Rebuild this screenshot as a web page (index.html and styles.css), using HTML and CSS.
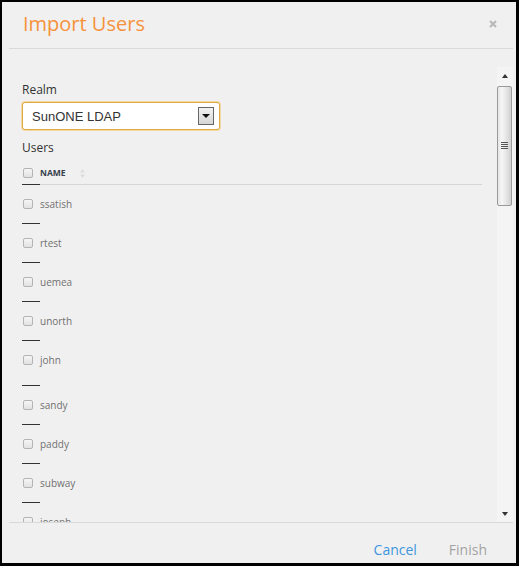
FILE: index.html
```html
<!DOCTYPE html>
<html lang="en">
<head>
    <meta charset="UTF-8">
    <meta name="viewport" content="width=device-width, initial-scale=1.0">
    <title>Import Users</title>
    <link rel="stylesheet" href="styles.css">
</head>
<body>
    <div class="dialog">
        <div class="dialog-header">
            <h1 class="dialog-title">Import Users</h1>
            <button class="dialog-close" title="Close">
                <svg width="8" height="8" viewBox="0 0 8 8"><path d="M1 1L7 7M7 1L1 7" stroke="#b8b8b8" stroke-width="2"/></svg>
            </button>
        </div>

        <div class="dialog-body">
            <div class="pane">
                <label class="field-label">Realm</label>
                <div class="select">
                    <span class="select-value">SunONE LDAP</span>
                    <span class="select-btn"><i class="caret"></i></span>
                </div>

                <label class="field-label users-label">Users</label>
                <table class="user-table">
                    <thead>
                        <tr>
                            <th class="col-check"><input type="checkbox"></th>
                            <th class="col-name">NAME <span class="sort">
                                <svg width="5" height="9" viewBox="0 0 5 9"><path d="M2.5 0L5 3.5H0Z M2.5 9L0 5.5H5Z" fill="#dcdcdc"/></svg>
                            </span></th>
                        </tr>
                    </thead>
                    <tbody>
                        <tr><td class="col-check"><input type="checkbox"></td><td class="col-name">ssatish</td></tr>
                        <tr><td class="col-check"><input type="checkbox"></td><td class="col-name">rtest</td></tr>
                        <tr><td class="col-check"><input type="checkbox"></td><td class="col-name">uemea</td></tr>
                        <tr><td class="col-check"><input type="checkbox"></td><td class="col-name">unorth</td></tr>
                        <tr class="tall"><td class="col-check"><input type="checkbox"></td><td class="col-name">john</td></tr>
                        <tr><td class="col-check"><input type="checkbox"></td><td class="col-name">sandy</td></tr>
                        <tr><td class="col-check"><input type="checkbox"></td><td class="col-name">paddy</td></tr>
                        <tr><td class="col-check"><input type="checkbox"></td><td class="col-name">subway</td></tr>
                        <tr><td class="col-check"><input type="checkbox"></td><td class="col-name">joseph</td></tr>
                    </tbody>
                </table>
            </div>

            <!-- vertical scroll rail for the user list -->
            <div class="scrollbar">
                <div class="scroll-btn"><i class="arrow-up"></i></div>
                <div class="scroll-track">
                    <div class="scroll-thumb">
                        <svg width="7" height="8" viewBox="0 0 7 8"><path d="M0 0.5H7M0 2.5H7M0 4.5H7M0 6.5H7" stroke="#555" stroke-width="1"/></svg>
                    </div>
                </div>
                <div class="scroll-btn"><i class="arrow-down"></i></div>
            </div>
        </div>

        <div class="dialog-footer">
            <button class="btn-link">Cancel</button>
            <button class="btn-link" disabled>Finish</button>
        </div>
    </div>
</body>
</html>
```

FILE: styles.css
```css
html, body {
    margin: 0;
    padding: 0;
    background: #000;
}
body {
    font-family: 'Open Sans', 'Segoe UI', sans-serif;
    color: #333;
}
.dialog {
    margin: 2px 3px 3px 2px;
    height: 561px;
    background: #f0f0f0;
    display: flex;
    flex-direction: column;
}

/* header */
.dialog-header {
    display: flex;
    align-items: flex-start;
    justify-content: space-between;
    margin: 0 3px 0 7px;
    padding: 8px 0 11px 14px;
    border-bottom: 1px solid #d9d9d9;
}
.dialog-title {
    margin: 0;
    font-size: 20px;
    font-weight: 400;
    line-height: 27px;
    color: #f6923c;
}
.dialog-close {
    background: none;
    border: none;
    padding: 0;
    margin: 10px 16px 0 0;
    width: 8px;
    height: 8px;
    cursor: pointer;
}
.dialog-close svg {
    display: block;
}

/* scrolling body */
.dialog-body {
    margin: 18px 3px 0 7px;
    height: 455px;
    display: flex;
}
.pane {
    flex: 1;
    overflow: hidden;
    padding: 14px 15px 0 13px;
}

.scrollbar {
    width: 16px;
    display: flex;
    flex-direction: column;
    background: #f4f4f4;
}
.scroll-btn {
    height: 17px;
    display: flex;
    align-items: center;
    justify-content: center;
}
.arrow-up,
.arrow-down {
    width: 0;
    height: 0;
    border-left: 3.5px solid transparent;
    border-right: 3.5px solid transparent;
}
.arrow-up {
    border-bottom: 4px solid #333;
}
.arrow-down {
    border-top: 4px solid #333;
}
.scroll-track {
    flex: 1;
    padding-top: 2px;
}
.scroll-thumb {
    height: 120px;
    margin: 0 1px 0 0;
    box-sizing: border-box;
    border: 1px solid #9a9a9a;
    border-radius: 2px;
    background: linear-gradient(to right, #e6e6e6, #f6f6f6 30%, #e2e2e2 70%, #cfcfcf);
    display: flex;
    align-items: center;
    justify-content: center;
}
.scroll-thumb svg {
    display: block;
}

.field-label {
    display: block;
    font-size: 12px;
    line-height: 17px;
    color: #333;
}
.users-label {
    margin-top: 9px;
}

/* realm select */
.select {
    margin-top: 4px;
    width: 198px;
    height: 28px;
    box-sizing: border-box;
    display: flex;
    align-items: center;
    background: #fff;
    border: 1px solid #e0a842;
    border-radius: 3px;
    box-shadow: 0 0 0 1px #f2d9a8;
    padding: 0 5px 0 9px;
}
.select-value {
    flex: 1;
    font-family: 'Liberation Sans', Arial, sans-serif;
    font-size: 13px;
    color: #333;
}
.select-btn {
    width: 16px;
    height: 18px;
    box-sizing: border-box;
    border: 1px solid #666;
    background: linear-gradient(#f2f2f2, #d6d6d6);
    display: flex;
    align-items: center;
    justify-content: center;
}
.caret {
    width: 0;
    height: 0;
    border-left: 4px solid transparent;
    border-right: 4px solid transparent;
    border-top: 4px solid #111;
}

/* users table */
.user-table {
    width: 460px;
    margin-top: 5px;
    border-collapse: collapse;
}
.user-table th,
.user-table td {
    padding: 0;
    text-align: left;
}
.user-table th {
    height: 23px;
    font-size: 8.5px;
    font-weight: 700;
    color: #36404a;
    border-bottom: 1px solid #d6d6d6;
    vertical-align: middle;
}
.user-table th.col-check {
    border-bottom-color: #333;
}
.col-check {
    width: 18px;
}
.user-table td {
    height: 38px;
    font-size: 10px;
    color: #707070;
    vertical-align: middle;
}
.user-table td.col-check {
    border-bottom: 1px solid #333;
}
.user-table tr.tall td {
    padding-bottom: 6px;
}
.sort {
    display: inline-block;
    margin-left: 12px;
    vertical-align: middle;
}
.sort svg {
    display: block;
}

input[type="checkbox"] {
    appearance: none;
    -webkit-appearance: none;
    display: block;
    margin: 0 0 0 1px;
    width: 10px;
    height: 10px;
    border: 1px solid #b4b4b4;
    border-radius: 2px;
    background: linear-gradient(#f6f6f6, #e2e2e2);
    box-sizing: border-box;
}

/* footer */
.dialog-footer {
    margin: 0 3px 0 7px;
    border-top: 1px solid #d9d9d9;
    padding: 17px 26px 0 0;
    display: flex;
    justify-content: flex-end;
    gap: 32px;
}
.btn-link {
    background: none;
    border: none;
    padding: 0;
    font-family: 'Open Sans', 'Segoe UI', sans-serif;
    font-size: 14px;
    line-height: 19px;
    color: #3d97de;
    cursor: pointer;
}
.btn-link:disabled {
    color: #a3a3a3;
    cursor: default;
}
```
